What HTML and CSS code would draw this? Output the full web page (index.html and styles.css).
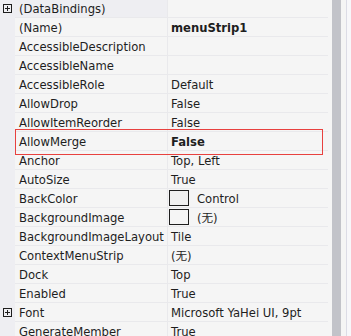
FILE: index.html
```html
<!DOCTYPE html>
<html>
<head>
<meta charset="utf-8">
<link rel="stylesheet" href="styles.css">
</head>
<body>
<div class="panel">
  <div class="props">
    <div class="row cat">
      <div class="gut"><svg class="plus" width="9" height="9" viewBox="0 0 9 9"><rect x="0.5" y="0.5" width="8" height="8" fill="none" stroke="#1e1e1e"/><path d="M2 4.5H7M4.5 2V7" stroke="#1e1e1e"/></svg></div>
      <div class="name">(DataBindings)</div><div class="div"></div><div class="val"></div>
    </div>
    <div class="row"><div class="gut"></div><div class="name">(Name)</div><div class="div"></div><div class="val b">menuStrip1</div></div>
    <div class="row"><div class="gut"></div><div class="name">AccessibleDescription</div><div class="div"></div><div class="val"></div></div>
    <div class="row"><div class="gut"></div><div class="name">AccessibleName</div><div class="div"></div><div class="val"></div></div>
    <div class="row"><div class="gut"></div><div class="name">AccessibleRole</div><div class="div"></div><div class="val">Default</div></div>
    <div class="row"><div class="gut"></div><div class="name">AllowDrop</div><div class="div"></div><div class="val">False</div></div>
    <div class="row"><div class="gut"></div><div class="name">AllowItemReorder</div><div class="div"></div><div class="val">False</div></div>
    <div class="row hl"><div class="gut"></div><div class="name">AllowMerge</div><div class="div"></div><div class="val b">False</div><div class="mark"></div></div>
    <div class="row"><div class="gut"></div><div class="name">Anchor</div><div class="div"></div><div class="val">Top, Left</div></div>
    <div class="row"><div class="gut"></div><div class="name">AutoSize</div><div class="div"></div><div class="val">True</div></div>
    <div class="row"><div class="gut"></div><div class="name">BackColor</div><div class="div"></div><div class="val"><span class="sw sw-ctl"></span>Control</div></div>
    <div class="row"><div class="gut"></div><div class="name">BackgroundImage</div><div class="div"></div><div class="val"><span class="sw"></span>(无)</div></div>
    <div class="row"><div class="gut"></div><div class="name">BackgroundImageLayout</div><div class="div"></div><div class="val">Tile</div></div>
    <div class="row"><div class="gut"></div><div class="name">ContextMenuStrip</div><div class="div"></div><div class="val">(无)</div></div>
    <div class="row"><div class="gut"></div><div class="name">Dock</div><div class="div"></div><div class="val">Top</div></div>
    <div class="row"><div class="gut"></div><div class="name">Enabled</div><div class="div"></div><div class="val">True</div></div>
    <div class="row">
      <div class="gut"><svg class="plus" width="9" height="9" viewBox="0 0 9 9"><rect x="0.5" y="0.5" width="8" height="8" fill="none" stroke="#1e1e1e"/><path d="M2 4.5H7M4.5 2V7" stroke="#1e1e1e"/></svg></div>
      <div class="name">Font</div><div class="div"></div><div class="val">Microsoft YaHei UI, 9pt</div>
    </div>
    <div class="row"><div class="gut"></div><div class="name">GenerateMember</div><div class="div"></div><div class="val">True</div></div>
  </div>
  <div class="scroll"><div class="thumb"></div></div>
  <div class="edge"></div>
</div>
</body>
</html>
```
FILE: styles.css
```css
html, body {
  margin: 0;
  padding: 0;
  background: #f5f5f5;
}
.panel {
  display: flex;
  width: 351px;
  height: 336px;
  overflow: hidden;
  font-family: "DejaVu Sans", "Noto Sans CJK SC", sans-serif;
  font-size: 11.6px;
  color: #1e1e1e;
}
.props {
  width: 328px;
  margin-top: -1px;
  display: flex;
  flex-direction: column;
  flex: none;
}
.row {
  position: relative;
  display: grid;
  grid-template-columns: 15px 152px 1px 160px;
  height: 19px;
}
.gut {
  background: #eeeef2;
  display: flex;
  align-items: center;
  padding-left: 3px;
  height: 19px;
}
.name, .val {
  height: 17px;
  padding-top: 1px;
  line-height: 18px;
  border-bottom: 1px solid #e9e9ec;
  background: #f5f5f5;
  white-space: nowrap;
  overflow: hidden;
}
.name {
  padding-left: 4px;
}
.val {
  padding-left: 3px;
  display: flex;
  align-items: center;
}
.cat .name {
  background: #eeeef2;
}
.div {
  background: #e9e9ec;
}
.b {
  font-weight: bold;
}
.plus {
  display: block;
  margin-top: -1px;
}
.sw {
  width: 20px;
  height: 16px;
  box-sizing: border-box;
  border: 1px solid #1e1e1e;
  margin-left: -2px;
  margin-right: 8px;
  margin-top: -1px;
  flex: none;
}
.sw-ctl {
  background: #f0f0f0;
}
.mark {
  position: absolute;
  z-index: 1;
  left: 15px;
  top: -3px;
  width: 308px;
  height: 26px;
  box-sizing: border-box;
  border: 1px solid #e8413f;
  pointer-events: none;
}
.scroll {
  width: 18px;
  flex: none;
  background: #f5f5f5;
  padding-left: 4px;
  box-sizing: border-box;
}
.thumb {
  width: 9px;
  height: 100%;
  background: #c2c3c9;
}
.edge {
  width: 5px;
  flex: none;
  border-left: 1px solid #dcdce6;
  background: #f7f7fa;
}
```
